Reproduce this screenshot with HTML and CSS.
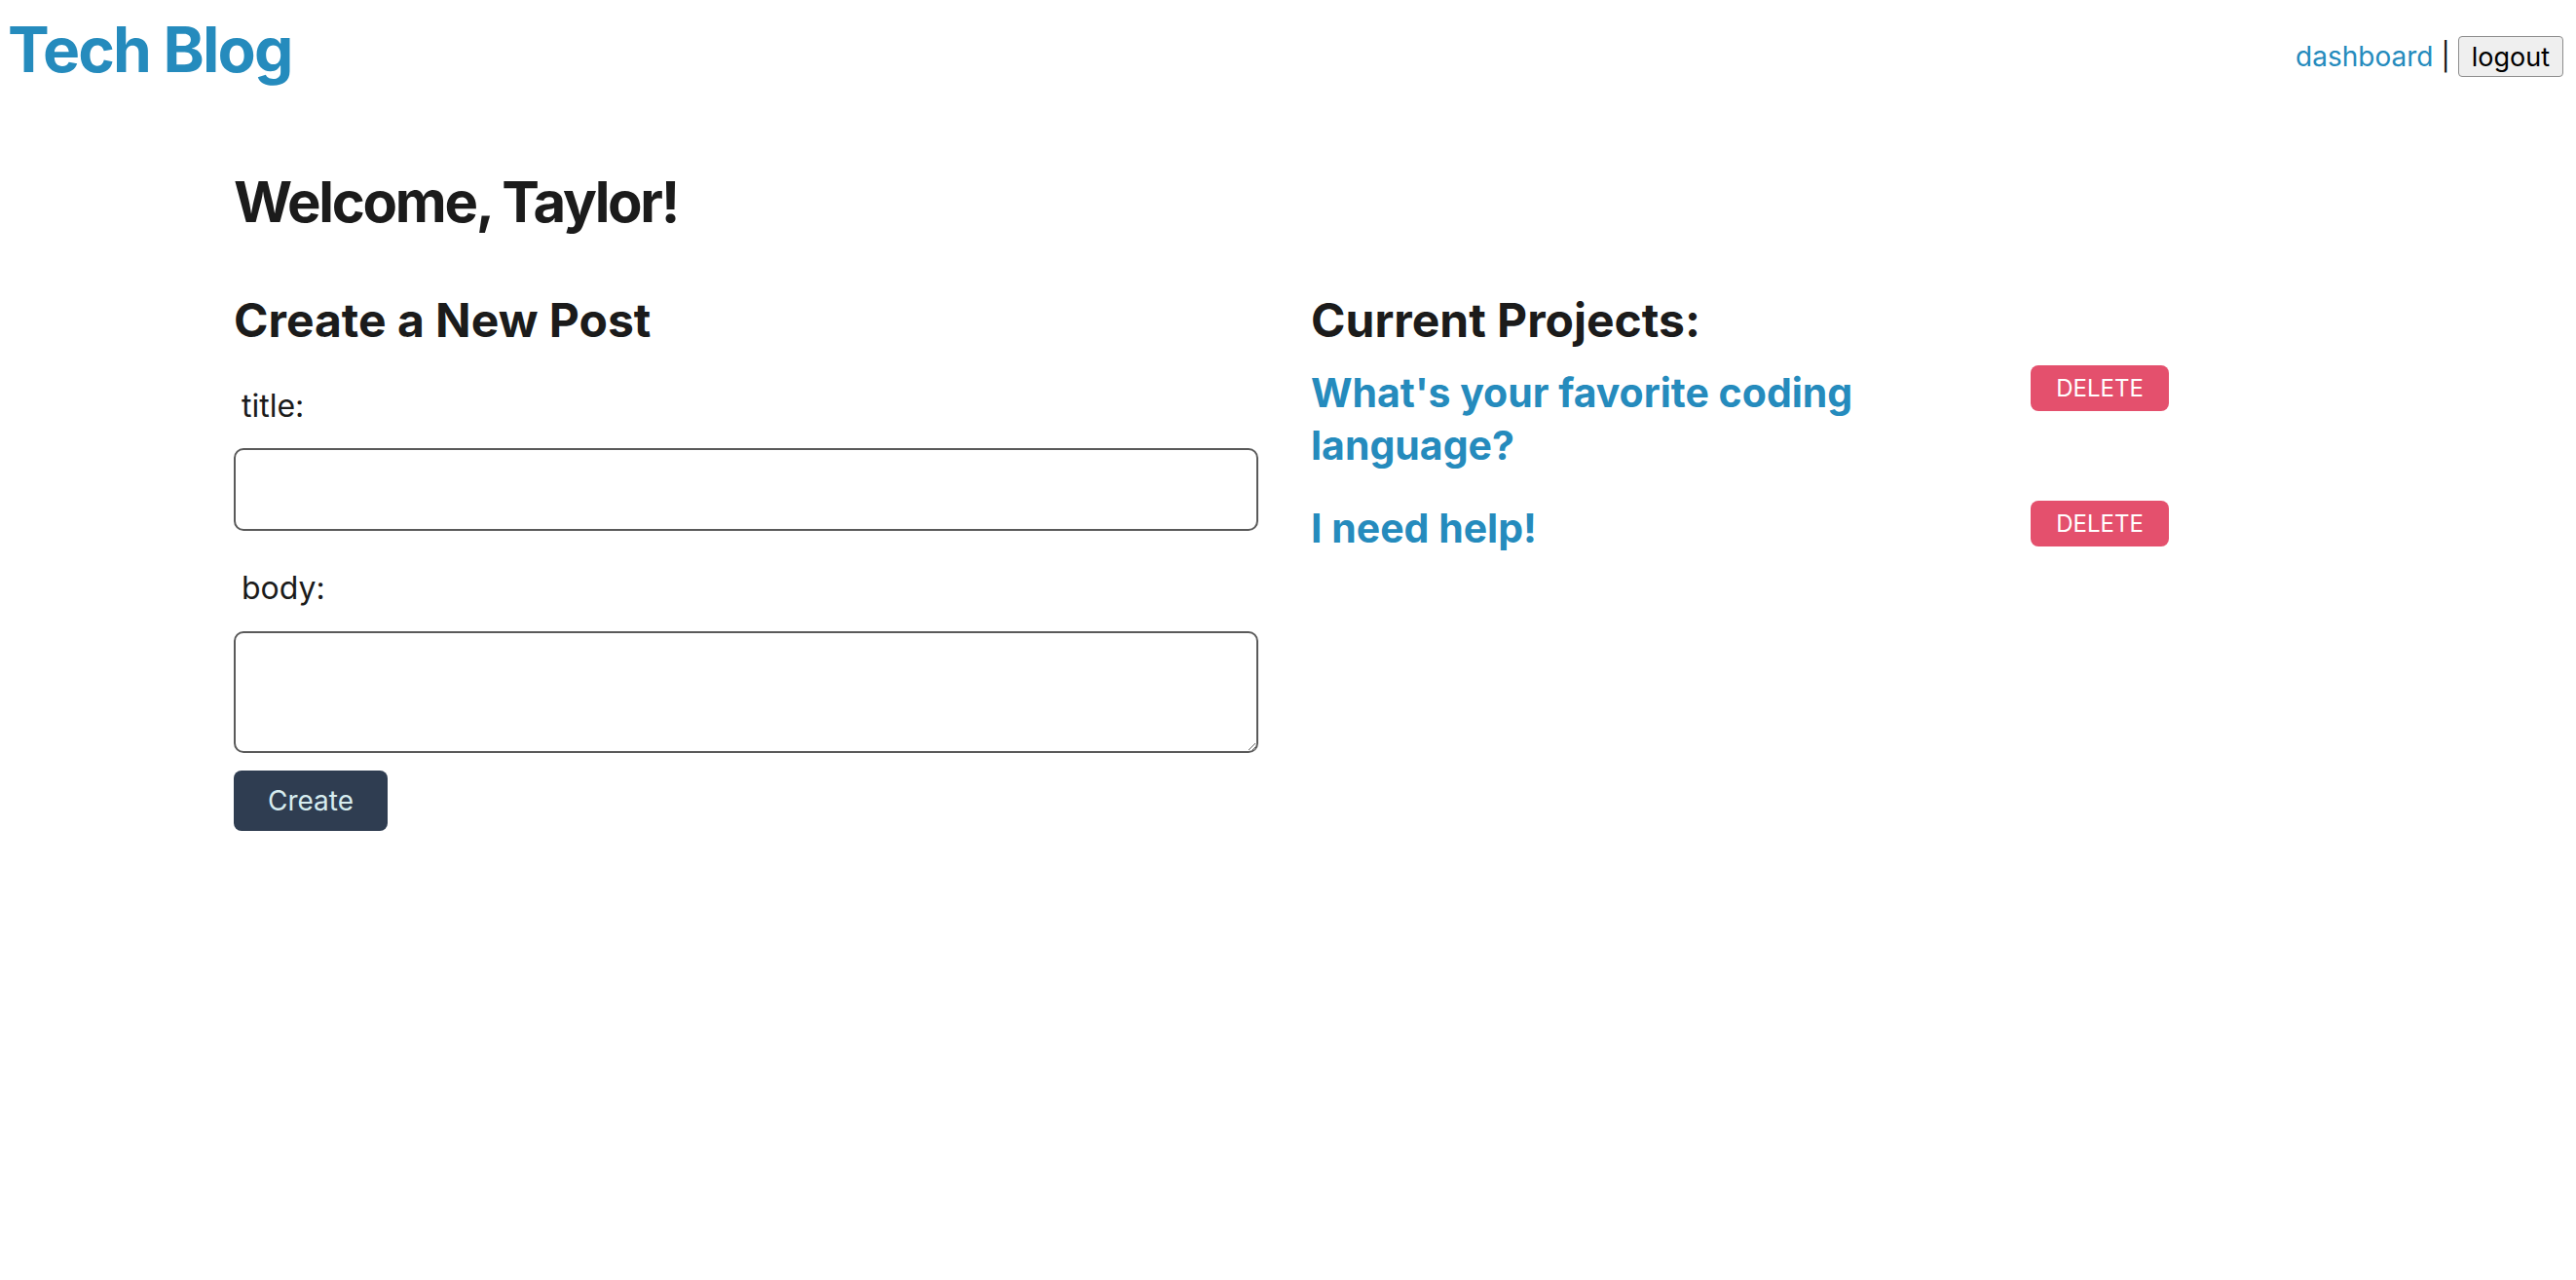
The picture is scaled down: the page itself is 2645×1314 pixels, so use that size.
FILE: index.html
```html
<!DOCTYPE html>
<html lang="en">
<head>
<meta charset="utf-8">
<title>Tech Blog</title>
<link rel="stylesheet" href="styles.css">
</head>
<body>
<header class="site-header">
  <a class="brand" href="#">Tech Blog</a>
  <nav class="nav">
    <a class="nav-link" href="#">dashboard</a>
    <span class="sep">|</span>
    <button class="logout" type="button">logout</button>
  </nav>
</header>
<main class="page">
  <h1 class="welcome">Welcome, Taylor!</h1>
  <div class="columns">
    <section class="col">
      <h2 class="section-title">Create a New Post</h2>
      <form class="post-form">
        <label class="field-label" for="title">title:</label>
        <input class="field-input" id="title" type="text">
        <label class="field-label" for="body">body:</label>
        <textarea class="field-area" id="body"></textarea>
        <button class="create-btn" type="button">Create</button>
      </form>
    </section>
    <section class="col">
      <h2 class="section-title">Current Projects:</h2>
      <ul class="projects">
        <li class="project">
          <a class="project-link" href="#">What's your favorite coding language?</a>
          <button class="delete-btn" type="button">DELETE</button>
        </li>
        <li class="project">
          <a class="project-link" href="#">I need help!</a>
          <button class="delete-btn" type="button">DELETE</button>
        </li>
      </ul>
    </section>
  </div>
</main>
</body>
</html>
```
FILE: styles.css
```css
* { box-sizing: border-box; }

body {
  margin: 0;
  font-family: Inter, "Noto Sans", "Liberation Sans", sans-serif;
  color: #1b1b1b;
  background: #fff;
}

.site-header {
  display: flex;
  justify-content: space-between;
  align-items: flex-start;
  padding: 13px 13px 0 8px;
}

.brand {
  font-size: 64px;
  font-weight: 700;
  line-height: 1.2;
  color: #258bbd;
  text-decoration: none;
  letter-spacing: -1.8px;
}

.nav {
  display: flex;
  align-items: baseline;
  gap: 8px;
  padding-top: 24px;
  font-size: 28px;
}

.nav-link {
  color: #258bbd;
  text-decoration: none;
}

.sep {
  color: #111;
}

.logout {
  font-family: Inter, "Noto Sans", sans-serif;
  font-size: 27px;
  height: 42px;
  padding: 0 13px;
  background: #efefef;
  color: #000;
  border: 1.5px solid #8d8d8d;
  border-radius: 4px;
}

.page {
  padding: 0 240px;
}

.welcome {
  margin: 83px 0 0;
  font-size: 58px;
  font-weight: 700;
  line-height: 1.2;
  letter-spacing: -2.3px;
}

.columns {
  display: grid;
  grid-template-columns: 1052px 1fr;
  gap: 54px;
  margin-top: 58px;
}

.section-title {
  margin: 0;
  font-size: 48px;
  font-weight: 700;
  line-height: 1.2;
}

.post-form {
  display: flex;
  flex-direction: column;
  align-items: flex-start;
}

.field-label {
  font-size: 32px;
  line-height: 1.2;
  margin: 40px 0 24px 8px;
}

.field-input,
.field-area {
  width: 100%;
  border: 2px solid #5a5a5a;
  border-radius: 10px;
  font-family: inherit;
  font-size: 28px;
  background: #fff;
}

.field-input { height: 85px; }

.field-area { height: 125px; }

.create-btn {
  margin-top: 18px;
  width: 158px;
  height: 62px;
  border: none;
  border-radius: 8px;
  background: #2f3d51;
  color: #d6ecef;
  font-family: inherit;
  font-size: 28px;
}

.projects {
  list-style: none;
  margin: 18px 0 0;
  padding: 0;
  width: 881px;
}

.project {
  display: flex;
  justify-content: space-between;
  align-items: flex-start;
  margin-bottom: 31px;
}

.project-link {
  max-width: 700px;
  font-size: 41px;
  font-weight: 700;
  line-height: 54px;
  color: #258bbd;
  text-decoration: none;
}

.delete-btn {
  margin-top: -1px;
  width: 142px;
  height: 47px;
  border: none;
  border-radius: 8px;
  background: #e4506d;
  color: #fff;
  font-family: inherit;
  font-size: 24px;
}
```
